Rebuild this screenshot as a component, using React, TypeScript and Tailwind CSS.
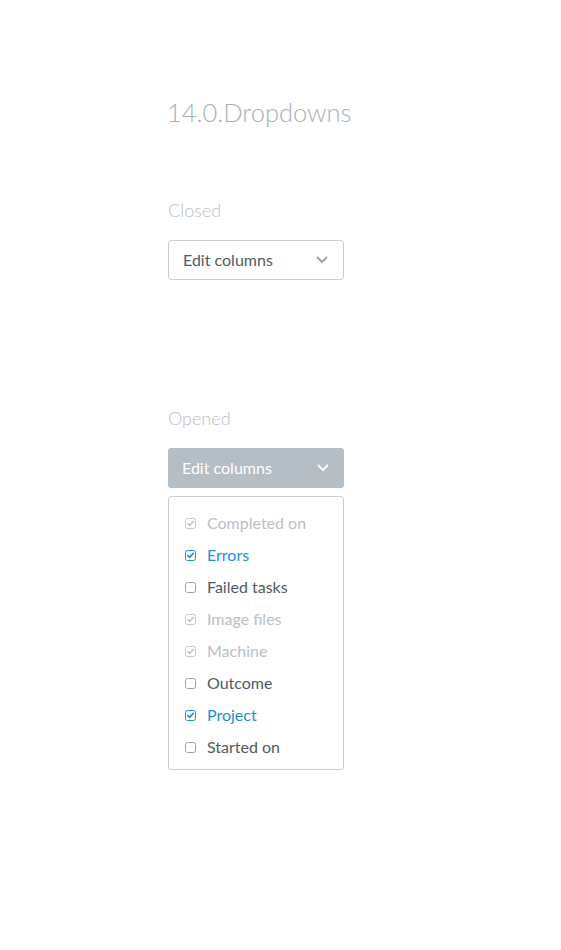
import React from "react";

type Item = { label: string; state: "disabled" | "checked" | "unchecked" };

const items: Item[] = [
    { label: "Completed on", state: "disabled" },
    { label: "Errors", state: "checked" },
    { label: "Failed tasks", state: "unchecked" },
    { label: "Image files", state: "disabled" },
    { label: "Machine", state: "disabled" },
    { label: "Outcome", state: "unchecked" },
    { label: "Project", state: "checked" },
    { label: "Started on", state: "unchecked" },
];

const Chevron = ({ color }: { color: string }) => (
    <svg width="12" height="8" viewBox="0 0 12 8" fill="none">
        <path d="M1.5 1.5L6 6L10.5 1.5" stroke={color} strokeWidth="1.8" strokeLinecap="round" strokeLinejoin="round" />
    </svg>
);

const Box = ({ state }: { state: Item["state"] }) => {
    const border =
        state === "checked" ? "#1a8fd6" : state === "disabled" ? "#c3c8cd" : "#9aa2aa";
    const tick = state === "checked" ? "#1a8fd6" : "#c3c8cd";
    return (
        <svg width="11" height="11" viewBox="0 0 11 11" fill="none">
            <rect x="0.5" y="0.5" width="10" height="10" rx="2" stroke={border} fill="white" />
            {state !== "unchecked" && (
                <path d="M2.8 5.6L4.6 7.4L8.2 3.4" stroke={tick} strokeWidth="1.6" strokeLinecap="round" strokeLinejoin="round" />
            )}
        </svg>
    );
};

export default function App() {
    return (
        <div className="min-h-[950px] bg-white font-['Lato',sans-serif] pl-[168px] pt-[96px]">
            <h1 className="text-[25.5px] font-light text-[#a7b1bb] leading-[32px] -ml-[1px]">
                14.0.Dropdowns
            </h1>

            <p className="mt-[70px] text-[18px] font-light text-[#b9c0c7] leading-[24px]">Closed</p>
            <button className="mt-[18px] w-[176px] h-[40px] border border-[#c8cdd2] rounded-[3px] flex items-center justify-between pl-[14px] pr-[15px] bg-white">
                <span className="text-[16px] text-[#505a64]">Edit columns</span>
                <Chevron color="#9aa2aa" />
            </button>

            <p className="mt-[126px] text-[18px] font-light text-[#b9c0c7] leading-[24px]">Opened</p>
            <button className="mt-[18px] w-[176px] h-[40px] rounded-[3px] flex items-center justify-between pl-[14px] pr-[15px] bg-[#b5bdc5]">
                <span className="text-[16px] text-white">Edit columns</span>
                <Chevron color="#ffffff" />
            </button>

            <div className="mt-[8px] w-[176px] border border-[#c8cdd2] rounded-[3px] bg-white pt-[10px] pb-[6px]">
                {items.map((item) => (
                    <div key={item.label} className="flex items-center h-[32px] pl-[16px] gap-[11px]">
                        <Box state={item.state} />
                        <span
                            className={`text-[16px] ${
                                item.state === "checked"
                                    ? "text-[#1a8fd6]"
                                    : item.state === "disabled"
                                    ? "text-[#b9c0c7]"
                                    : "text-[#505a64]"
                            }`}
                        >
                            {item.label}
                        </span>
                    </div>
                ))}
            </div>
        </div>
    );
}
